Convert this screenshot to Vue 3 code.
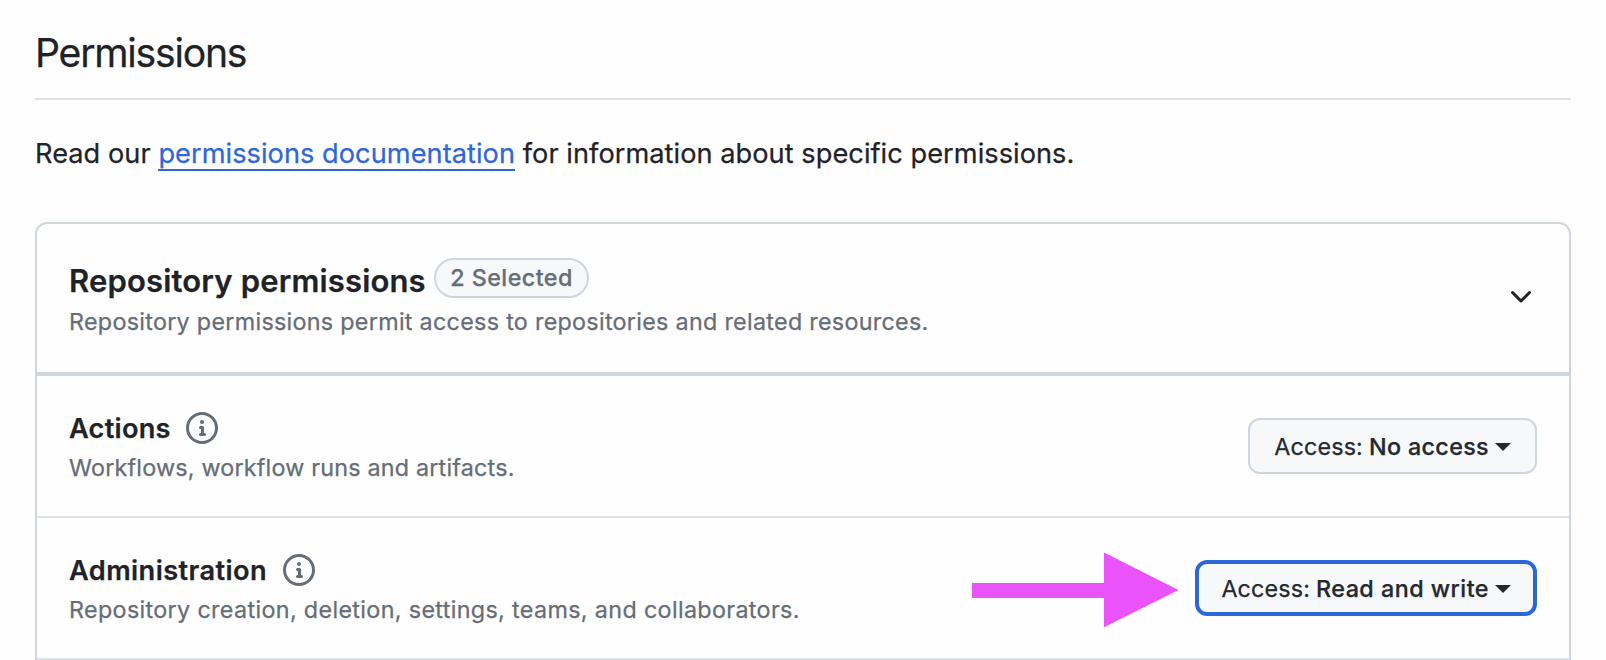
<script setup>
const rows = [
  { key: 'actions', name: 'Actions', desc: 'Workflows, workflow runs and artifacts.', access: 'No access', focused: false },
  { key: 'administration', name: 'Administration', desc: 'Repository creation, deletion, settings, teams, and collaborators.', access: 'Read and write', focused: true },
]
</script>

<template>
  <main class="page">
    <h2 class="title">Permissions</h2>
    <p class="intro">
      Read our <a class="link">permissions documentation</a> for information about specific permissions.
    </p>
    <section class="box">
      <header class="head">
        <div class="text">
          <div class="head-line">
            <h3 class="head-title">Repository permissions</h3>
            <span class="pill">2 Selected</span>
          </div>
          <p class="desc">Repository permissions permit access to repositories and related resources.</p>
        </div>
        <svg class="chevron" viewBox="0 0 16 16" width="32" height="32">
          <path d="M12.78 5.22a.749.749 0 0 1 0 1.06l-4.25 4.25a.749.749 0 0 1-1.06 0L3.22 6.28a.749.749 0 1 1 1.06-1.06L8 8.939l3.72-3.719a.749.749 0 0 1 1.06 0Z" />
        </svg>
      </header>
      <div v-for="row in rows" :key="row.key" class="row" :class="row.key">
        <div class="text">
          <div class="name-line">
            <strong class="name">{{ row.name }}</strong>
            <svg class="info" viewBox="0 0 16 16" width="32" height="32">
              <path d="M0 8a8 8 0 1 1 16 0A8 8 0 0 1 0 8Zm8-6.5a6.5 6.5 0 1 0 0 13 6.5 6.5 0 0 0 0-13ZM6.5 7.75A.75.75 0 0 1 7.25 7h1a.75.75 0 0 1 .75.75v2.75h.25a.75.75 0 0 1 0 1.5h-2a.75.75 0 0 1 0-1.5h.25v-2h-.25a.75.75 0 0 1-.75-.75ZM8 6a1 1 0 1 1 0-2 1 1 0 0 1 0 2Z" />
            </svg>
          </div>
          <p class="desc">{{ row.desc }}</p>
        </div>
        <button class="access" :class="{ focused: row.focused }" type="button">
          <span class="label">Access:</span>
          <span class="value">{{ row.access }}</span>
          <span class="caret"></span>
        </button>
        <svg v-if="row.focused" class="arrow" viewBox="0 0 207 76" width="207" height="76">
          <path d="M0 31H132V.5L206.5 38L132 75.3V46H0Z" />
        </svg>
      </div>
    </section>
  </main>
</template>

<style>
html, body { margin: 0; background: #fff; overflow: hidden; }
</style>

<style scoped>
.page {
  box-sizing: border-box;
  height: 660px;
  padding: 23px 35px 0;
  overflow: hidden;
  background: #fefefe;
  color: #1f2328;
  font-family: Inter, "Liberation Sans", sans-serif;
  -webkit-text-stroke-width: 0.25px;
}
.title {
  box-sizing: border-box;
  height: 75px;
  margin: 0;
  font-size: 39.2px;
  font-weight: 400;
  line-height: 60px;
  letter-spacing: -1.25px;
}
.intro {
  margin: 0;
  padding-top: 33px;
  height: 89px;
  border-top: 2px solid #dde2e7;
  font-size: 27.2px;
  line-height: 42px;
  letter-spacing: 0.04px;
  white-space: nowrap;
}
.link {
  display: inline-block;
  box-sizing: border-box;
  height: 38px;
  border-bottom: 2px solid #2e67d8;
  color: #2e67d8;
}
.box {
  padding-bottom: 24px;
  border: 2px solid #d0d6dc;
  border-radius: 12px;
}
.head, .row {
  position: relative;
  box-sizing: border-box;
  display: flex;
  align-items: center;
  justify-content: space-between;
  padding: 0 32px;
}
.head { height: 152px; border-bottom: 4px solid #d0d6dc; }
.row { height: 142px; border-bottom: 2px solid #dde2e7; }
.head-line { display: flex; align-items: center; height: 45px; }
.head-title { margin: 0; font-size: 31px; font-weight: 600; line-height: 44px; letter-spacing: 0.16px; }
.pill {
  box-sizing: border-box;
  height: 40px;
  margin: -6px 0 0 8px;
  padding: 0 14.5px;
  border: 2px solid #d0d6de;
  border-radius: 20px;
  background: #f6f8fa;
  color: #656d76;
  font-size: 23.3px;
  font-weight: 500;
  line-height: 36px;
  letter-spacing: 0.45px;
}
.desc {
  margin: 0;
  color: #656d76;
  font-size: 23.3px;
  line-height: 36px;
  letter-spacing: 0.3px;
  white-space: nowrap;
}
.head .text { padding-top: 2px; }
.row .text { padding-top: 1px; }
.actions .desc { letter-spacing: 0.21px; }
.administration .desc { letter-spacing: 0.355px; }
.chevron { margin-bottom: 2px; fill: #1f2328; }
.name-line { display: flex; align-items: center; gap: 15.5px; height: 42px; }
.name { padding-top: 1px; font-size: 27.2px; font-weight: 600; line-height: 42px; letter-spacing: 0.24px; }
.administration .name { letter-spacing: 0.42px; }
.info { margin-bottom: 1px; fill: #656d76; }
.access {
  box-sizing: border-box;
  display: flex;
  align-items: center;
  height: 56px;
  padding: 0 24px;
  border: 2px solid #d0d6de;
  border-radius: 12px;
  background: #f6f8fa;
  color: #24292f;
  font-family: inherit;
  font-size: 23.3px;
  line-height: 36px;
  white-space: nowrap;
}
.access.focused { border: 4px solid #2e67d8; padding: 0 22px; }
.label, .value { padding-top: 1px; letter-spacing: 0.15px; }
.value { margin-left: 6px; font-weight: 500; letter-spacing: 0.36px; }
.focused .value { letter-spacing: 0.48px; }
.caret {
  margin: 1px 0 0 6px;
  border: 8px solid transparent;
  border-top-color: #24292f;
  border-bottom: 0;
}
.arrow { position: absolute; left: 935px; top: 34px; fill: #ea53f9; }
</style>
